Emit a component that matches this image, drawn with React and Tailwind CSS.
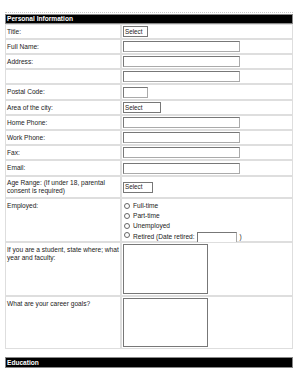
import React from "react";

const font = { fontFamily: '"Liberation Sans", Arial, sans-serif' };

function TextBox({ w }) {
  return <div className={`h-[11px] bg-white border border-[#777] border-b-[#aaa] border-r-[#aaa] ${w}`} />;
}

function SelectBox({ w }) {
  return (
    <div className={`h-[11px] bg-white border border-[#777] flex items-center pl-[1px] text-[6.3px] leading-[8px] text-[#222] ${w}`}>
      Select
    </div>
  );
}

function Radio({ children }) {
  return (
    <div className="flex items-center h-[10px] text-[6.6px] leading-[8px] text-[#222]">
      <span className="w-[6px] h-[6px] rounded-full border border-[#666] bg-white mr-[3px] ml-[1px]" />
      {children}
    </div>
  );
}

function Row({ h, label, top, children }) {
  return (
    <div className={`flex ${h}`}>
      <div
        className={`w-[116px] shrink-0 border border-[#dedede] px-[1px] flex text-[6.6px] leading-[8px] text-[#222] ${
          top ? "items-start pt-[3px]" : "items-center"
        }`}
      >
        <span>{label}</span>
      </div>
      <div className={`flex-1 border border-[#dedede] p-[1px] flex ${top ? "items-start" : "items-center"}`}>{children}</div>
    </div>
  );
}

export default function App() {
  return (
    <div className="w-[298px] h-[386px] bg-white overflow-hidden" style={font}>
      <div className="pt-[12px] pl-[5px] w-[293px]">
        <div className="border-t border-dotted border-[#c8c8c8] pt-[1px]">
          <div className="h-[10px] bg-black border border-[#888] flex items-center pl-[1px] text-white font-bold text-[6.6px] leading-[8px]">
            Personal Information
          </div>
          <Row h="h-[15px]" label="Title:">
            <SelectBox w="w-[25px]" />
          </Row>
          <Row h="h-[15px]" label="Full Name:">
            <TextBox w="w-[117px]" />
          </Row>
          <Row h="h-[15px]" label="Address:">
            <TextBox w="w-[117px]" />
          </Row>
          <Row h="h-[15px]" label="">
            <TextBox w="w-[117px]" />
          </Row>
          <Row h="h-[16px]" label="Postal Code:">
            <TextBox w="w-[25px]" />
          </Row>
          <Row h="h-[15px]" label="Area of the city:">
            <SelectBox w="w-[38px]" />
          </Row>
          <Row h="h-[15px]" label="Home Phone:">
            <TextBox w="w-[117px]" />
          </Row>
          <Row h="h-[15px]" label="Work Phone:">
            <TextBox w="w-[117px]" />
          </Row>
          <Row h="h-[15px]" label="Fax:">
            <TextBox w="w-[117px]" />
          </Row>
          <Row h="h-[16px]" label="Email:">
            <TextBox w="w-[117px]" />
          </Row>
          <Row h="h-[22px]" label="Age Range: (If under 18, parental consent is required)">
            <SelectBox w="w-[30px]" />
          </Row>
          <Row h="h-[44px]" label="Employed:" top>
            <div className="flex flex-col pt-[1px]">
              <Radio>Full-time</Radio>
              <Radio>Part-time</Radio>
              <Radio>Unemployed</Radio>
              <div className="flex items-center h-[12px] text-[6.6px] leading-[8px] text-[#222]">
                <span className="w-[6px] h-[6px] rounded-full border border-[#666] bg-white mr-[3px] ml-[1px] -mt-[4px]" />
                <span>Retired (Date retired:</span>
                <span className="ml-[2px] h-[11px] w-[40px] bg-white border border-[#777] border-b-[#aaa] border-r-[#aaa]" />
                <span className="ml-[3px]">)</span>
              </div>
            </div>
          </Row>
          <Row h="h-[54px]" label="If you are a student, state where; what year and faculty:" top>
            <div className="h-[50px] w-[85px] bg-white border border-[#777]" />
          </Row>
          <Row h="h-[53px]" label="What are your career goals?" top>
            <div className="h-[49px] w-[85px] bg-white border border-[#777]" />
          </Row>
          <div className="h-[11px] mt-[8px] bg-black border border-[#888] flex items-center pl-[1px] text-white font-bold text-[6.6px] leading-[8px]">
            Education
          </div>
        </div>
      </div>
    </div>
  );
}
